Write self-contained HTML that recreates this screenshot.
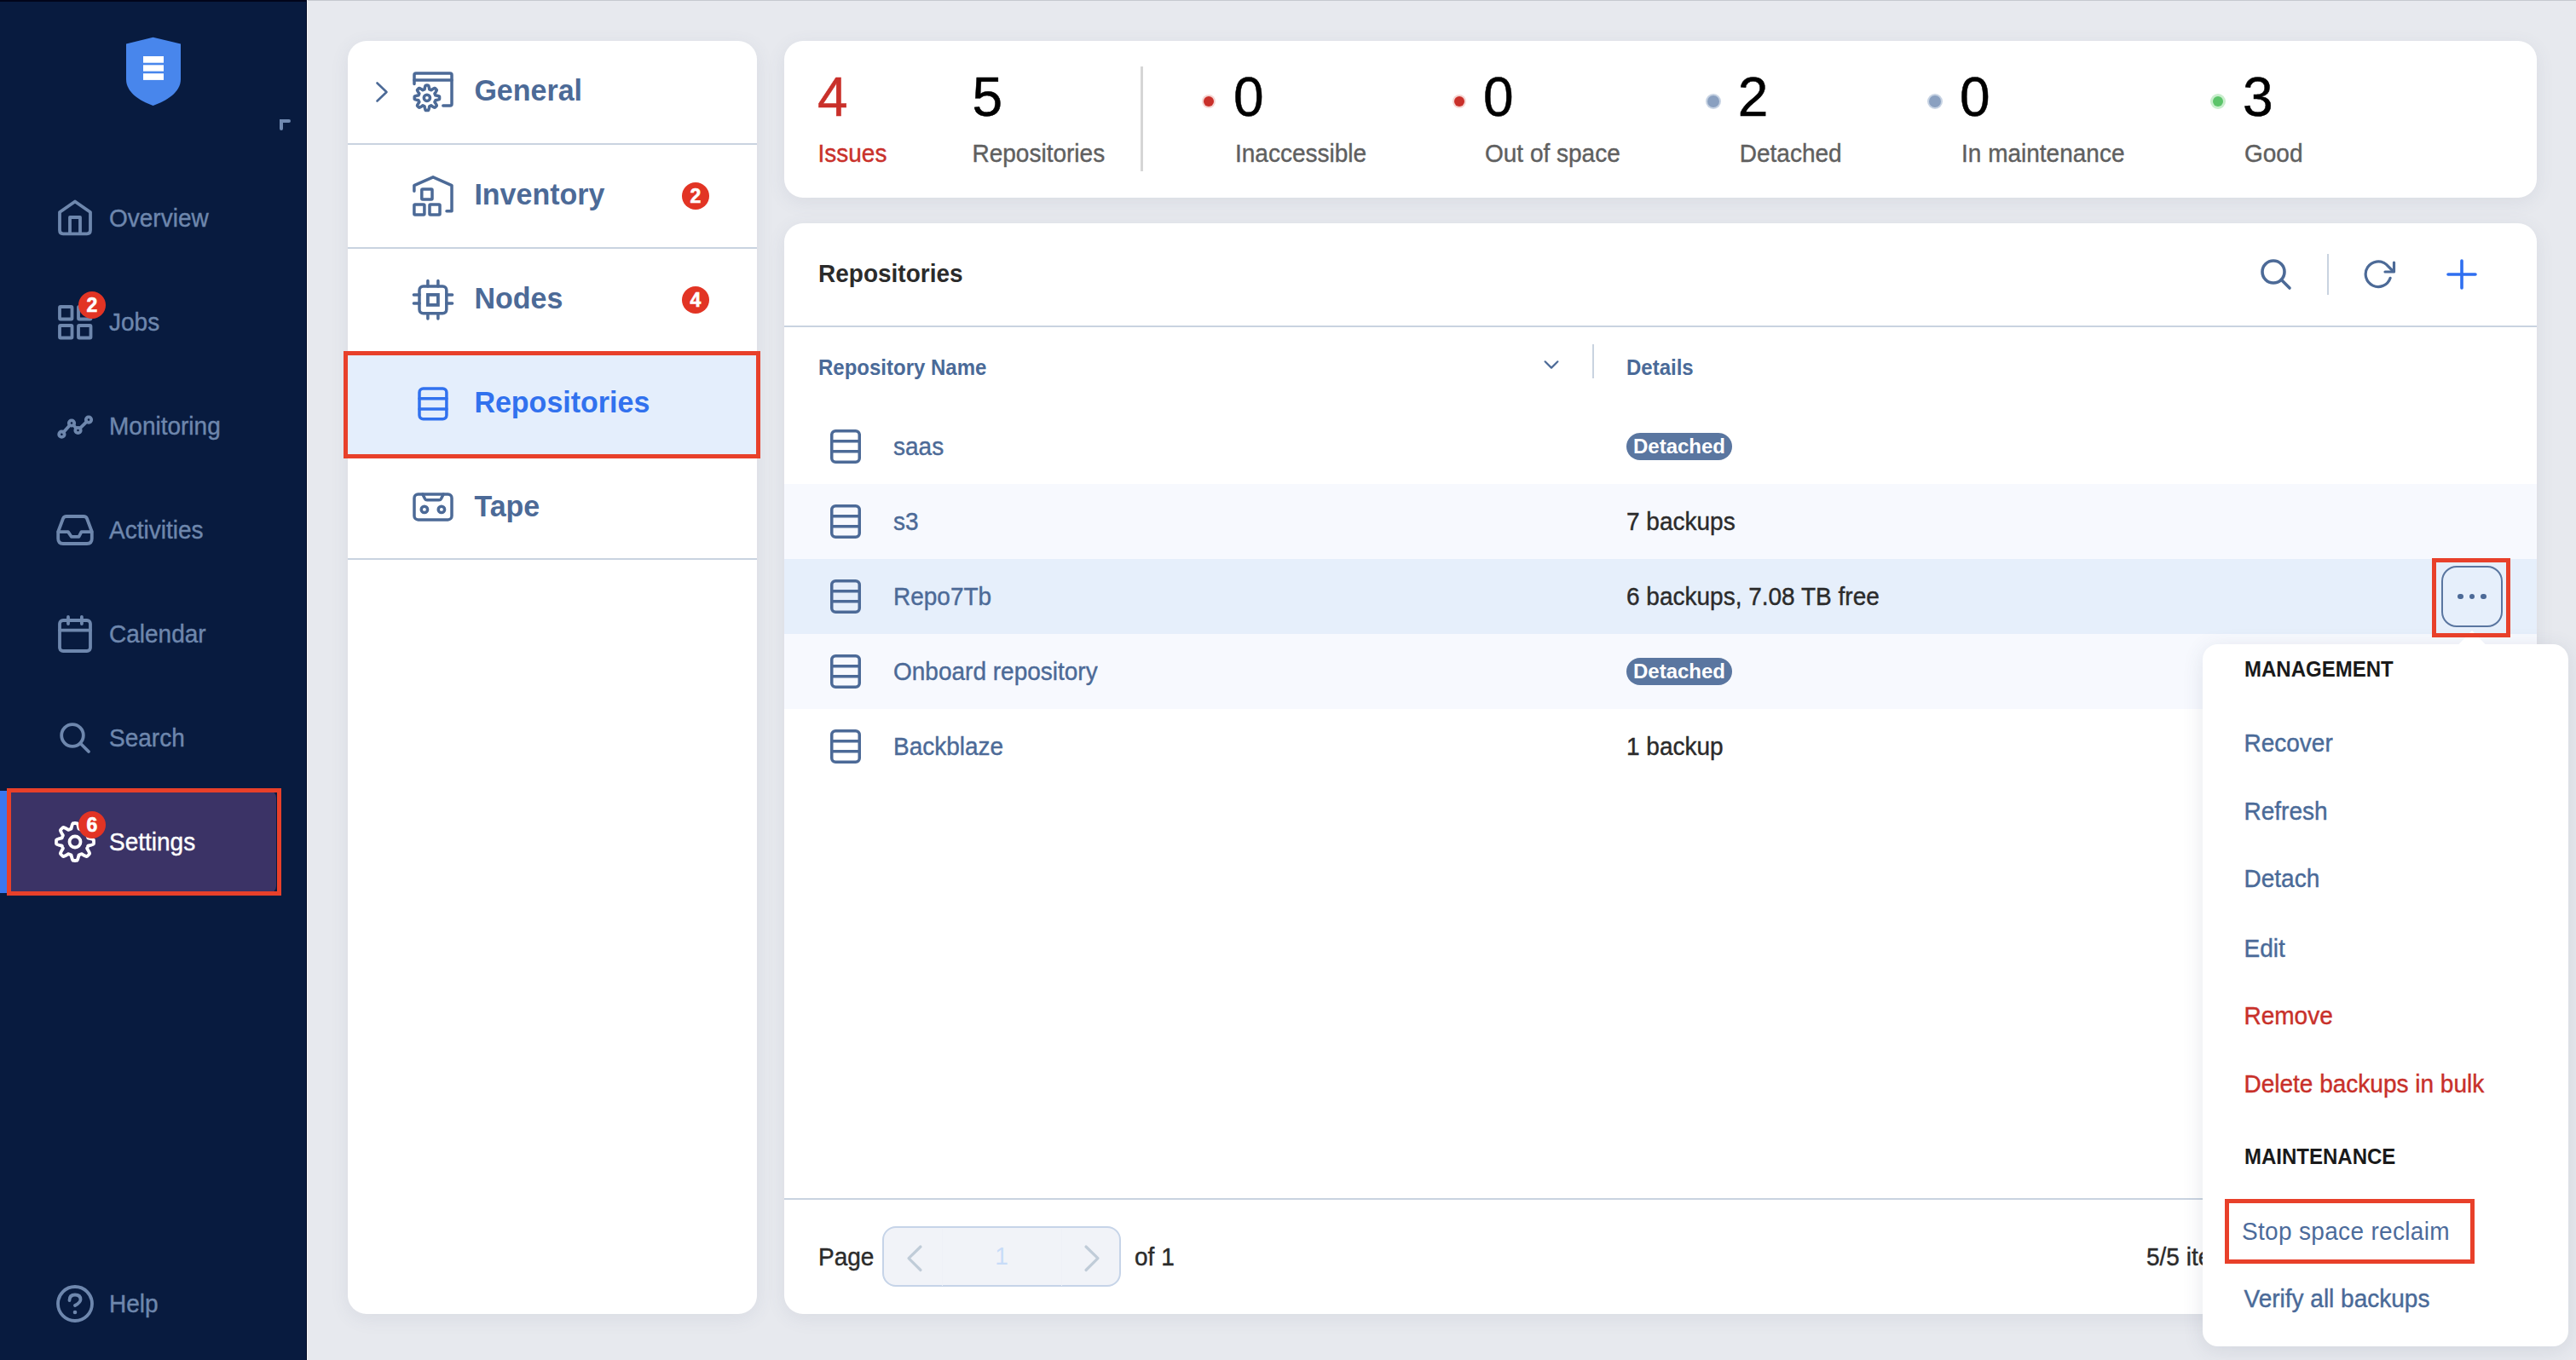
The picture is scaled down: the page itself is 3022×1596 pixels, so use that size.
<!DOCTYPE html>
<html><head><meta charset="utf-8">
<style>
*{margin:0;padding:0;box-sizing:border-box}
html,body{width:3022px;height:1596px;overflow:hidden;background:#e7e9ee;font-family:"Liberation Sans",sans-serif}
.a{position:absolute}
.t{position:absolute;white-space:nowrap}
svg{position:absolute;left:0;top:0;overflow:visible}
</style></head><body>
<div class="a" style="left:0;top:0;width:360px;height:1596px;background:#081b3f"></div>
<div class="a" style="left:0;top:0;width:360px;height:1.5px;background:#01051a"></div>
<div class="a" style="left:358.5px;top:0;width:1.5px;height:1596px;background:#030c26"></div>
<div class="a" style="left:361px;top:0;width:2661px;height:1px;background:#c6c9cf"></div>
<div class="a" style="left:360px;top:0;width:1px;height:1596px;background:#f4f5f8"></div>
<svg width="360" height="1596">
  <path d="M179.6 43.8 L212 51.4 L212 93 C212 108 196 118 179.6 124 C163 118 148 108 148 93 L148 51.4 Z" fill="#4886ec"/>
  <rect x="168" y="66" width="24" height="7.7" fill="#fff"/>
  <rect x="168" y="76.3" width="24" height="7.3" fill="#fff"/>
  <rect x="168" y="86.2" width="24" height="7.7" fill="#fff"/>
  <path d="M330 151 L330 142 L339 142" fill="none" stroke="#7089b0" stroke-width="4" stroke-linecap="round"/>
  <g fill="none" stroke="#6e87ad" stroke-width="3.8" stroke-linecap="round" stroke-linejoin="round">
    <path d="M70 249 L88 236.5 L106 249 L106 270 Q106 274.3 102 274.3 L74 274.3 Q70 274.3 70 270 Z"/>
    <path d="M82 274 L82 255 L94 255 L94 274"/>
    <rect x="70" y="360" width="14.5" height="14.5" rx="1"/>
    <rect x="92" y="360" width="14.5" height="14.5" rx="1"/>
    <rect x="70" y="382" width="14.5" height="14.5" rx="1"/>
    <rect x="92" y="382" width="14.5" height="14.5" rx="1"/>
    <circle cx="72.4" cy="509.7" r="3.2"/>
    <circle cx="84" cy="496.5" r="3.2"/>
    <circle cx="91.5" cy="505" r="3.2"/>
    <circle cx="104" cy="492.6" r="3.2"/>
    <path d="M74.5 507.3 L81.9 498.9 M86.2 499 L89.3 502.5 M93.8 502.7 L101.7 494.9"/>
    <path d="M68.2 624 L68.2 632 Q68.2 638 74 638 L102 638 Q107.8 638 107.8 632 L107.8 624 L102 608.5 Q101 606 98 606 L78 606 Q75 606 74 608.5 Z"/>
    <path d="M68.5 624.1 L79.9 624.1 L83.7 629.8 L92.5 629.8 L95.5 624.1 L107.5 624.1"/>
    <rect x="70" y="728" width="36" height="36" rx="4"/>
    <path d="M70 739.7 L106 739.7 M80 724 L80 732 M95.9 724 L95.9 732"/>
    <circle cx="85" cy="863" r="12.8"/>
    <path d="M94.5 872.5 L104 882"/>
    <circle cx="88" cy="1530" r="20"/>
    <path d="M81.5 1526 Q81.5 1519.5 88 1519.5 Q94.5 1519.5 94.5 1525 Q94.5 1528.5 88 1532"/>
  </g>
  <circle cx="88" cy="1540" r="2.3" fill="#6e87ad"/>
</svg>
<div class="a" style="left:0;top:928px;width:8px;height:120px;background:#3a78f0"></div>
<div class="a" style="left:8px;top:928px;width:316px;height:120px;background:#3b3366;border-radius:0 8px 8px 0"></div>
<svg width="360" height="1596">
  <g fill="none" stroke="#fff" stroke-width="3.8" stroke-linejoin="round">
    <path d="M88.00 966.00 L88.58 966.01 L89.15 966.03 L89.73 966.07 L90.30 966.12 L90.79 966.78 L91.20 967.77 L91.55 968.82 L91.85 969.91 L92.09 970.97 L92.30 971.97 L92.54 972.66 L92.94 972.78 L93.34 972.92 L93.73 973.06 L94.12 973.22 L94.51 973.38 L94.89 973.56 L95.26 973.74 L95.63 973.94 L96.30 973.62 L97.15 973.06 L98.07 972.49 L99.05 971.93 L100.04 971.43 L101.03 971.02 L101.85 970.90 L102.29 971.27 L102.72 971.65 L103.14 972.04 L103.56 972.44 L103.96 972.86 L104.35 973.28 L104.73 973.71 L105.10 974.15 L104.98 974.97 L104.57 975.96 L104.07 976.95 L103.51 977.93 L102.94 978.85 L102.38 979.70 L102.06 980.37 L102.26 980.74 L102.44 981.11 L102.62 981.49 L102.78 981.88 L102.94 982.27 L103.08 982.66 L103.22 983.06 L103.34 983.46 L104.03 983.70 L105.03 983.91 L106.09 984.15 L107.18 984.45 L108.23 984.80 L109.22 985.21 L109.88 985.70 L109.93 986.27 L109.97 986.85 L109.99 987.42 L110.00 988.00 L109.99 988.58 L109.97 989.15 L109.93 989.73 L109.88 990.30 L109.22 990.79 L108.23 991.20 L107.18 991.55 L106.09 991.85 L105.03 992.09 L104.03 992.30 L103.34 992.54 L103.22 992.94 L103.08 993.34 L102.94 993.73 L102.78 994.12 L102.62 994.51 L102.44 994.89 L102.26 995.26 L102.06 995.63 L102.38 996.30 L102.94 997.15 L103.51 998.07 L104.07 999.05 L104.57 1000.04 L104.98 1001.03 L105.10 1001.85 L104.73 1002.29 L104.35 1002.72 L103.96 1003.14 L103.56 1003.56 L103.14 1003.96 L102.72 1004.35 L102.29 1004.73 L101.85 1005.10 L101.03 1004.98 L100.04 1004.57 L99.05 1004.07 L98.07 1003.51 L97.15 1002.94 L96.30 1002.38 L95.63 1002.06 L95.26 1002.26 L94.89 1002.44 L94.51 1002.62 L94.12 1002.78 L93.73 1002.94 L93.34 1003.08 L92.94 1003.22 L92.54 1003.34 L92.30 1004.03 L92.09 1005.03 L91.85 1006.09 L91.55 1007.18 L91.20 1008.23 L90.79 1009.22 L90.30 1009.88 L89.73 1009.93 L89.15 1009.97 L88.58 1009.99 L88.00 1010.00 L87.42 1009.99 L86.85 1009.97 L86.27 1009.93 L85.70 1009.88 L85.21 1009.22 L84.80 1008.23 L84.45 1007.18 L84.15 1006.09 L83.91 1005.03 L83.70 1004.03 L83.46 1003.34 L83.06 1003.22 L82.66 1003.08 L82.27 1002.94 L81.88 1002.78 L81.49 1002.62 L81.11 1002.44 L80.74 1002.26 L80.37 1002.06 L79.70 1002.38 L78.85 1002.94 L77.93 1003.51 L76.95 1004.07 L75.96 1004.57 L74.97 1004.98 L74.15 1005.10 L73.71 1004.73 L73.28 1004.35 L72.86 1003.96 L72.44 1003.56 L72.04 1003.14 L71.65 1002.72 L71.27 1002.29 L70.90 1001.85 L71.02 1001.03 L71.43 1000.04 L71.93 999.05 L72.49 998.07 L73.06 997.15 L73.62 996.30 L73.94 995.63 L73.74 995.26 L73.56 994.89 L73.38 994.51 L73.22 994.12 L73.06 993.73 L72.92 993.34 L72.78 992.94 L72.66 992.54 L71.97 992.30 L70.97 992.09 L69.91 991.85 L68.82 991.55 L67.77 991.20 L66.78 990.79 L66.12 990.30 L66.07 989.73 L66.03 989.15 L66.01 988.58 L66.00 988.00 L66.01 987.42 L66.03 986.85 L66.07 986.27 L66.12 985.70 L66.78 985.21 L67.77 984.80 L68.82 984.45 L69.91 984.15 L70.97 983.91 L71.97 983.70 L72.66 983.46 L72.78 983.06 L72.92 982.66 L73.06 982.27 L73.22 981.88 L73.38 981.49 L73.56 981.11 L73.74 980.74 L73.94 980.37 L73.62 979.70 L73.06 978.85 L72.49 977.93 L71.93 976.95 L71.43 975.96 L71.02 974.97 L70.90 974.15 L71.27 973.71 L71.65 973.28 L72.04 972.86 L72.44 972.44 L72.86 972.04 L73.28 971.65 L73.71 971.27 L74.15 970.90 L74.97 971.02 L75.96 971.43 L76.95 971.93 L77.93 972.49 L78.85 973.06 L79.70 973.62 L80.37 973.94 L80.74 973.74 L81.11 973.56 L81.49 973.38 L81.88 973.22 L82.27 973.06 L82.66 972.92 L83.06 972.78 L83.46 972.66 L83.70 971.97 L83.91 970.97 L84.15 969.91 L84.45 968.82 L84.80 967.77 L85.21 966.78 L85.70 966.12 L86.27 966.07 L86.85 966.03 L87.42 966.01 Z"/>
    <circle cx="88" cy="988" r="6.5"/>
  </g>
</svg>
<div class="a" style="left:92px;top:342px;width:32px;height:32px;border-radius:16px;background:#e23424"></div>
<div class="t" style="left:92px;top:342px;width:32px;height:32px;line-height:32px;text-align:center;color:#fff;font-weight:bold;font-size:23px;-webkit-text-stroke:0.6px #fff">2</div>
<div class="a" style="left:92px;top:952px;width:32px;height:32px;border-radius:16px;background:#e23424"></div>
<div class="t" style="left:92px;top:952px;width:32px;height:32px;line-height:32px;text-align:center;color:#fff;font-weight:bold;font-size:23px;-webkit-text-stroke:0.6px #fff">6</div>
<div class="t" style="left:128px;top:243.0px;font-size:28px;line-height:28px;color:#6e87ad;-webkit-text-stroke:0.4px #6e87ad;transform:scaleY(1.06);transform-origin:0 23.71px;">Overview</div>
<div class="t" style="left:128px;top:365.0px;font-size:28px;line-height:28px;color:#6e87ad;-webkit-text-stroke:0.4px #6e87ad;transform:scaleY(1.06);transform-origin:0 23.71px;">Jobs</div>
<div class="t" style="left:128px;top:487.0px;font-size:28px;line-height:28px;color:#6e87ad;-webkit-text-stroke:0.4px #6e87ad;transform:scaleY(1.06);transform-origin:0 23.71px;">Monitoring</div>
<div class="t" style="left:128px;top:609.0px;font-size:28px;line-height:28px;color:#6e87ad;-webkit-text-stroke:0.4px #6e87ad;transform:scaleY(1.06);transform-origin:0 23.71px;">Activities</div>
<div class="t" style="left:128px;top:731.0px;font-size:28px;line-height:28px;color:#6e87ad;-webkit-text-stroke:0.4px #6e87ad;transform:scaleY(1.06);transform-origin:0 23.71px;">Calendar</div>
<div class="t" style="left:128px;top:853.0px;font-size:28px;line-height:28px;color:#6e87ad;-webkit-text-stroke:0.4px #6e87ad;transform:scaleY(1.06);transform-origin:0 23.71px;">Search</div>
<div class="t" style="left:128px;top:975.0px;font-size:28px;line-height:28px;color:#fff;-webkit-text-stroke:0.4px #fff;transform:scaleY(1.06);transform-origin:0 23.71px;">Settings</div>
<div class="t" style="left:128px;top:1517.0px;font-size:28px;line-height:28px;color:#6e87ad;-webkit-text-stroke:0.4px #6e87ad;transform:scaleY(1.06);transform-origin:0 23.71px;">Help</div>
<div class="a" style="left:8px;top:925px;width:322px;height:126px;border:5px solid #e8402a"></div>
<div class="a" style="left:408px;top:48px;width:480px;height:1494px;background:#fff;border-radius:22px;box-shadow:0 5px 22px rgba(80,90,125,0.09)"></div>
<div class="a" style="left:408px;top:168px;width:480px;height:2px;background:#c9d3e0"></div>
<div class="a" style="left:408px;top:290px;width:480px;height:2px;background:#c9d3e0"></div>
<div class="a" style="left:408px;top:412px;width:480px;height:2px;background:#c9d3e0"></div>
<div class="a" style="left:408px;top:534px;width:480px;height:2px;background:#c9d3e0"></div>
<div class="a" style="left:408px;top:655px;width:480px;height:2px;background:#c9d3e0"></div>
<div class="a" style="left:408px;top:414px;width:480px;height:121px;background:#e4eefc"></div>
<svg width="900" height="700">
 <g fill="none" stroke="#4c6a97" stroke-width="3.5" stroke-linecap="round" stroke-linejoin="round">
  <path d="M442.5 97.5 L453.5 108 L442.5 118.5" stroke-width="2.6"/>
  <path d="M486 98.4 L486 88 Q486 86 488 86 L528 86 Q530 86 530 88 L530 122 Q530 124 528 124 L519.8 124"/>
  <path d="M486 94 L530 94"/>
  <path d="M500.90 100.10 L501.28 100.11 L501.67 100.12 L502.05 100.15 L502.44 100.18 L502.76 100.66 L503.03 101.38 L503.24 102.15 L503.42 102.93 L503.56 103.70 L503.68 104.43 L503.83 104.92 L504.08 105.00 L504.34 105.09 L504.59 105.18 L504.84 105.28 L505.09 105.39 L505.33 105.50 L505.58 105.62 L505.81 105.75 L506.27 105.50 L506.86 105.07 L507.51 104.63 L508.19 104.20 L508.89 103.81 L509.58 103.49 L510.15 103.38 L510.45 103.62 L510.74 103.88 L511.02 104.14 L511.29 104.41 L511.56 104.68 L511.82 104.96 L512.08 105.25 L512.32 105.55 L512.21 106.12 L511.89 106.81 L511.50 107.51 L511.07 108.19 L510.63 108.84 L510.20 109.43 L509.95 109.89 L510.08 110.12 L510.20 110.37 L510.31 110.61 L510.42 110.86 L510.52 111.11 L510.61 111.36 L510.70 111.62 L510.78 111.87 L511.27 112.02 L512.00 112.14 L512.77 112.28 L513.55 112.46 L514.32 112.67 L515.04 112.94 L515.52 113.26 L515.55 113.65 L515.58 114.03 L515.59 114.42 L515.60 114.80 L515.59 115.18 L515.58 115.57 L515.55 115.95 L515.52 116.34 L515.04 116.66 L514.32 116.93 L513.55 117.14 L512.77 117.32 L512.00 117.46 L511.27 117.58 L510.78 117.73 L510.70 117.98 L510.61 118.24 L510.52 118.49 L510.42 118.74 L510.31 118.99 L510.20 119.23 L510.08 119.48 L509.95 119.71 L510.20 120.17 L510.63 120.76 L511.07 121.41 L511.50 122.09 L511.89 122.79 L512.21 123.48 L512.32 124.05 L512.08 124.35 L511.82 124.64 L511.56 124.92 L511.29 125.19 L511.02 125.46 L510.74 125.72 L510.45 125.98 L510.15 126.22 L509.58 126.11 L508.89 125.79 L508.19 125.40 L507.51 124.97 L506.86 124.53 L506.27 124.10 L505.81 123.85 L505.58 123.98 L505.33 124.10 L505.09 124.21 L504.84 124.32 L504.59 124.42 L504.34 124.51 L504.08 124.60 L503.83 124.68 L503.68 125.17 L503.56 125.90 L503.42 126.67 L503.24 127.45 L503.03 128.22 L502.76 128.94 L502.44 129.42 L502.05 129.45 L501.67 129.48 L501.28 129.49 L500.90 129.50 L500.52 129.49 L500.13 129.48 L499.75 129.45 L499.36 129.42 L499.04 128.94 L498.77 128.22 L498.56 127.45 L498.38 126.67 L498.24 125.90 L498.12 125.17 L497.97 124.68 L497.72 124.60 L497.46 124.51 L497.21 124.42 L496.96 124.32 L496.71 124.21 L496.47 124.10 L496.22 123.98 L495.99 123.85 L495.53 124.10 L494.94 124.53 L494.29 124.97 L493.61 125.40 L492.91 125.79 L492.22 126.11 L491.65 126.22 L491.35 125.98 L491.06 125.72 L490.78 125.46 L490.51 125.19 L490.24 124.92 L489.98 124.64 L489.72 124.35 L489.48 124.05 L489.59 123.48 L489.91 122.79 L490.30 122.09 L490.73 121.41 L491.17 120.76 L491.60 120.17 L491.85 119.71 L491.72 119.48 L491.60 119.23 L491.49 118.99 L491.38 118.74 L491.28 118.49 L491.19 118.24 L491.10 117.98 L491.02 117.73 L490.53 117.58 L489.80 117.46 L489.03 117.32 L488.25 117.14 L487.48 116.93 L486.76 116.66 L486.28 116.34 L486.25 115.95 L486.22 115.57 L486.21 115.18 L486.20 114.80 L486.21 114.42 L486.22 114.03 L486.25 113.65 L486.28 113.26 L486.76 112.94 L487.48 112.67 L488.25 112.46 L489.03 112.28 L489.80 112.14 L490.53 112.02 L491.02 111.87 L491.10 111.62 L491.19 111.36 L491.28 111.11 L491.38 110.86 L491.49 110.61 L491.60 110.37 L491.72 110.12 L491.85 109.89 L491.60 109.43 L491.17 108.84 L490.73 108.19 L490.30 107.51 L489.91 106.81 L489.59 106.12 L489.48 105.55 L489.72 105.25 L489.98 104.96 L490.24 104.68 L490.51 104.41 L490.78 104.14 L491.06 103.88 L491.35 103.62 L491.65 103.38 L492.22 103.49 L492.91 103.81 L493.61 104.20 L494.29 104.63 L494.94 105.07 L495.53 105.50 L495.99 105.75 L496.22 105.62 L496.47 105.50 L496.71 105.39 L496.96 105.28 L497.21 105.18 L497.46 105.09 L497.72 105.00 L497.97 104.92 L498.12 104.43 L498.24 103.70 L498.38 102.93 L498.56 102.15 L498.77 101.38 L499.04 100.66 L499.36 100.18 L499.75 100.15 L500.13 100.12 L500.52 100.11 Z"/>
  <circle cx="500.9" cy="114.8" r="3.6"/>
  <path d="M485.9 224.2 L485.9 217.6 L508 207.8 L530 217.6 L530 247.8 L524 247.8"/>
  <rect x="494.8" y="222.1" width="12.2" height="11.8" rx="1"/>
  <rect x="485.9" y="240" width="12" height="12" rx="1"/>
  <rect x="504" y="240" width="12" height="12" rx="1"/>
  <rect x="492" y="336" width="31.8" height="31.8" rx="4.5"/>
  <rect x="501.9" y="345.9" width="12" height="12" stroke-width="3.8" stroke-linecap="butt" stroke-linejoin="miter"/>
  <path d="M501.9 329.4 L501.9 336 M513.9 329.4 L513.9 336 M501.9 368 L501.9 374.1 M513.9 368 L513.9 374.1 M485.4 345.9 L492 345.9 M485.4 356 L492 356 M524 345.9 L530.6 345.9 M524 356 L530.6 356"/>
  <rect x="486" y="580" width="44" height="29.9" rx="4.5"/>
  <path d="M495.8 580 L498.6 585.5 Q499.3 586.8 501 586.8 L515 586.8 Q516.7 586.8 517.4 585.5 L520.2 580"/>
  <circle cx="497.9" cy="597.9" r="3.7"/>
  <circle cx="517.9" cy="597.9" r="3.7"/>
 </g>
 <g fill="none" stroke="#3171ee" stroke-width="3.5" stroke-linecap="round" stroke-linejoin="round">
  <rect x="492" y="456" width="31.9" height="35.8" rx="4.5"/>
  <path d="M492 467.8 L523.9 467.8 M492 479.9 L523.9 479.9"/>
 </g>
</svg>
<div class="t" style="left:556.4px;top:89.2px;font-size:34px;line-height:34px;font-weight:bold;color:#4c6a97;transform:scaleY(1.04);transform-origin:0 28.79px;">General</div>
<div class="t" style="left:556.4px;top:211.2px;font-size:34px;line-height:34px;font-weight:bold;color:#4c6a97;transform:scaleY(1.04);transform-origin:0 28.79px;">Inventory</div>
<div class="t" style="left:556.4px;top:333.2px;font-size:34px;line-height:34px;font-weight:bold;color:#4c6a97;transform:scaleY(1.04);transform-origin:0 28.79px;">Nodes</div>
<div class="t" style="left:556.4px;top:455.2px;font-size:34px;line-height:34px;font-weight:bold;color:#3171ee;transform:scaleY(1.04);transform-origin:0 28.79px;">Repositories</div>
<div class="t" style="left:556.4px;top:577.2px;font-size:34px;line-height:34px;font-weight:bold;color:#4c6a97;transform:scaleY(1.04);transform-origin:0 28.79px;">Tape</div>
<div class="a" style="left:800px;top:214px;width:32px;height:32px;border-radius:16px;background:#e23424"></div>
<div class="t" style="left:800px;top:214px;width:32px;height:32px;line-height:32px;text-align:center;color:#fff;font-weight:bold;font-size:23px;-webkit-text-stroke:0.6px #fff">2</div>
<div class="a" style="left:800px;top:336px;width:32px;height:32px;border-radius:16px;background:#e23424"></div>
<div class="t" style="left:800px;top:336px;width:32px;height:32px;line-height:32px;text-align:center;color:#fff;font-weight:bold;font-size:23px;-webkit-text-stroke:0.6px #fff">4</div>
<div class="a" style="left:403px;top:412px;width:489px;height:126px;border:5px solid #e8402a"></div>
<div class="a" style="left:920px;top:48px;width:2056px;height:184px;background:#fff;border-radius:22px;box-shadow:0 5px 22px rgba(80,90,125,0.09)"></div>
<div class="t" style="left:959px;top:82.4px;font-size:64px;line-height:64px;color:#c9302a;-webkit-text-stroke:0.5px #c9302a;transform:scaleY(1.02);transform-origin:0 54.19px;">4</div>
<div class="t" style="left:959.5px;top:167.0px;font-size:28px;line-height:28px;color:#c9302a;-webkit-text-stroke:0.4px #c9302a;transform:scaleY(1.06);transform-origin:0 23.71px;">Issues</div>
<div class="t" style="left:1140.5px;top:82.4px;font-size:64px;line-height:64px;color:#000;-webkit-text-stroke:0.5px #000;transform:scaleY(1.02);transform-origin:0 54.19px;">5</div>
<div class="t" style="left:1140.5px;top:167.0px;font-size:28px;line-height:28px;color:#5f5f5f;-webkit-text-stroke:0.4px #5f5f5f;transform:scaleY(1.06);transform-origin:0 23.71px;">Repositories</div>
<div class="a" style="left:1338px;top:78px;width:3px;height:123px;background:#d6d6d6"></div>
<div class="a" style="left:1412px;top:113px;width:12px;height:12px;border-radius:6px;background:#c9302a;box-shadow:0 0 0 2px #f6d5d2"></div>
<div class="t" style="left:1447px;top:82.4px;font-size:64px;line-height:64px;color:#000;-webkit-text-stroke:0.5px #000;transform:scaleY(1.02);transform-origin:0 54.19px;">0</div>
<div class="t" style="left:1449px;top:167.0px;font-size:28px;line-height:28px;color:#5f5f5f;-webkit-text-stroke:0.4px #5f5f5f;transform:scaleY(1.06);transform-origin:0 23.71px;">Inaccessible</div>
<div class="a" style="left:1706px;top:113px;width:12px;height:12px;border-radius:6px;background:#c9302a;box-shadow:0 0 0 2px #f6d5d2"></div>
<div class="t" style="left:1740px;top:82.4px;font-size:64px;line-height:64px;color:#000;-webkit-text-stroke:0.5px #000;transform:scaleY(1.02);transform-origin:0 54.19px;">0</div>
<div class="t" style="left:1742px;top:167.0px;font-size:28px;line-height:28px;color:#5f5f5f;-webkit-text-stroke:0.4px #5f5f5f;transform:scaleY(1.06);transform-origin:0 23.71px;">Out of space</div>
<div class="a" style="left:2002.6px;top:112px;width:14px;height:14px;border-radius:7px;background:#8aa0c0;box-shadow:0 0 0 2px #c7d3e3"></div>
<div class="t" style="left:2038.8px;top:82.4px;font-size:64px;line-height:64px;color:#000;-webkit-text-stroke:0.5px #000;transform:scaleY(1.02);transform-origin:0 54.19px;">2</div>
<div class="t" style="left:2040.8px;top:167.0px;font-size:28px;line-height:28px;color:#5f5f5f;-webkit-text-stroke:0.4px #5f5f5f;transform:scaleY(1.06);transform-origin:0 23.71px;">Detached</div>
<div class="a" style="left:2262.6px;top:112px;width:14px;height:14px;border-radius:7px;background:#8aa0c0;box-shadow:0 0 0 2px #c7d3e3"></div>
<div class="t" style="left:2299px;top:82.4px;font-size:64px;line-height:64px;color:#000;-webkit-text-stroke:0.5px #000;transform:scaleY(1.02);transform-origin:0 54.19px;">0</div>
<div class="t" style="left:2301px;top:167.0px;font-size:28px;line-height:28px;color:#5f5f5f;-webkit-text-stroke:0.4px #5f5f5f;transform:scaleY(1.06);transform-origin:0 23.71px;">In maintenance</div>
<div class="a" style="left:2596px;top:113px;width:12px;height:12px;border-radius:6px;background:#5cc46a;box-shadow:0 0 0 3px #c9eecd"></div>
<div class="t" style="left:2631px;top:82.4px;font-size:64px;line-height:64px;color:#000;-webkit-text-stroke:0.5px #000;transform:scaleY(1.02);transform-origin:0 54.19px;">3</div>
<div class="t" style="left:2633px;top:167.0px;font-size:28px;line-height:28px;color:#5f5f5f;-webkit-text-stroke:0.4px #5f5f5f;transform:scaleY(1.06);transform-origin:0 23.71px;">Good</div>
<div class="a" style="left:920px;top:262px;width:2056px;height:1280px;background:#fff;border-radius:22px;box-shadow:0 5px 22px rgba(80,90,125,0.09)"></div>
<div class="t" style="left:960px;top:308.3px;font-size:28px;line-height:28px;font-weight:bold;color:#2b2b2b;transform:scaleY(1.04);transform-origin:0 23.71px;">Repositories</div>
<div class="a" style="left:920px;top:382px;width:2056px;height:2px;background:#c9d3e0"></div>
<div class="a" style="left:2730px;top:298px;width:2px;height:48px;background:#c9d3e0"></div>
<div class="a" style="left:920px;top:480px;width:2056px;height:88px;background:#ffffff"></div>
<svg width="1100" height="1000"><g fill="none" stroke="#4c6a97" stroke-width="3.5"><rect x="975.75" y="505.75" width="32.5" height="36.5" rx="4.5"/><path d="M975.75 517.8 L1008.25 517.8 M975.75 529.8 L1008.25 529.8"/></g></svg>
<div class="t" style="left:1048px;top:511.4px;font-size:28px;line-height:28px;color:#4c6a97;-webkit-text-stroke:0.4px #4c6a97;transform:scaleY(1.06);transform-origin:0 23.71px;">saas</div>
<div class="t" style="left:1908px;top:508px;width:124px;height:32px;border-radius:16px;background:#5a76a0;color:#fff;font-weight:bold;font-size:24px;line-height:32px;text-align:center">Detached</div>
<div class="a" style="left:920px;top:568px;width:2056px;height:88px;background:#f7f9fe"></div>
<svg width="1100" height="1000"><g fill="none" stroke="#4c6a97" stroke-width="3.5"><rect x="975.75" y="593.75" width="32.5" height="36.5" rx="4.5"/><path d="M975.75 605.8 L1008.25 605.8 M975.75 617.8 L1008.25 617.8"/></g></svg>
<div class="t" style="left:1048px;top:599.4px;font-size:28px;line-height:28px;color:#4c6a97;-webkit-text-stroke:0.4px #4c6a97;transform:scaleY(1.06);transform-origin:0 23.71px;">s3</div>
<div class="t" style="left:1908px;top:599.4px;font-size:28px;line-height:28px;color:#2b2b2b;-webkit-text-stroke:0.4px #2b2b2b;transform:scaleY(1.06);transform-origin:0 23.71px;">7 backups</div>
<div class="a" style="left:920px;top:656px;width:2056px;height:88px;background:#e6effb"></div>
<svg width="1100" height="1000"><g fill="none" stroke="#4c6a97" stroke-width="3.5"><rect x="975.75" y="681.75" width="32.5" height="36.5" rx="4.5"/><path d="M975.75 693.8 L1008.25 693.8 M975.75 705.8 L1008.25 705.8"/></g></svg>
<div class="t" style="left:1048px;top:687.4px;font-size:28px;line-height:28px;color:#4c6a97;-webkit-text-stroke:0.4px #4c6a97;transform:scaleY(1.06);transform-origin:0 23.71px;">Repo7Tb</div>
<div class="t" style="left:1908px;top:687.4px;font-size:28px;line-height:28px;color:#2b2b2b;-webkit-text-stroke:0.4px #2b2b2b;transform:scaleY(1.06);transform-origin:0 23.71px;">6 backups, 7.08 TB free</div>
<div class="a" style="left:920px;top:744px;width:2056px;height:88px;background:#f7f9fe"></div>
<svg width="1100" height="1000"><g fill="none" stroke="#4c6a97" stroke-width="3.5"><rect x="975.75" y="769.75" width="32.5" height="36.5" rx="4.5"/><path d="M975.75 781.8 L1008.25 781.8 M975.75 793.8 L1008.25 793.8"/></g></svg>
<div class="t" style="left:1048px;top:775.4px;font-size:28px;line-height:28px;color:#4c6a97;-webkit-text-stroke:0.4px #4c6a97;transform:scaleY(1.06);transform-origin:0 23.71px;">Onboard repository</div>
<div class="t" style="left:1908px;top:772px;width:124px;height:32px;border-radius:16px;background:#5a76a0;color:#fff;font-weight:bold;font-size:24px;line-height:32px;text-align:center">Detached</div>
<div class="a" style="left:920px;top:832px;width:2056px;height:88px;background:#ffffff"></div>
<svg width="1100" height="1000"><g fill="none" stroke="#4c6a97" stroke-width="3.5"><rect x="975.75" y="857.75" width="32.5" height="36.5" rx="4.5"/><path d="M975.75 869.8 L1008.25 869.8 M975.75 881.8 L1008.25 881.8"/></g></svg>
<div class="t" style="left:1048px;top:863.4px;font-size:28px;line-height:28px;color:#4c6a97;-webkit-text-stroke:0.4px #4c6a97;transform:scaleY(1.06);transform-origin:0 23.71px;">Backblaze</div>
<div class="t" style="left:1908px;top:863.4px;font-size:28px;line-height:28px;color:#2b2b2b;-webkit-text-stroke:0.4px #2b2b2b;transform:scaleY(1.06);transform-origin:0 23.71px;">1 backup</div>
<svg width="3022" height="1596">
 <g fill="none" stroke="#4c6a97" stroke-width="3.6" stroke-linecap="round" stroke-linejoin="round">
  <circle cx="2667" cy="319" r="13"/>
  <path d="M2676.5 328.5 L2686 338"/>
  <path d="M2804.08 326.27 A14.8 14.8 0 1 1 2799.51 310.36 L2807.5 318.3" stroke-width="3.2"/>
  <path d="M2808.5 308 L2808.5 319 L2798 319" stroke-width="3.2"/>
  <path d="M1812.6 424.3 L1820 431.6 L1827.4 424.3" stroke-width="2.2"/>
 </g>
 <path d="M2888 306 L2888 338 M2872 322 L2904 322" fill="none" stroke="#2f6ff0" stroke-width="3.6" stroke-linecap="round"/>
</svg>
<div class="t" style="left:960px;top:420.0px;font-size:24px;line-height:24px;font-weight:bold;color:#4a6a98;transform:scaleY(1.04);transform-origin:0 20.32px;">Repository Name</div>
<div class="a" style="left:1868px;top:404px;width:2px;height:40px;background:#c9d3e0"></div>
<div class="t" style="left:1908px;top:420.0px;font-size:24px;line-height:24px;font-weight:bold;color:#4a6a98;transform:scaleY(1.04);transform-origin:0 20.32px;">Details</div>
<div class="a" style="left:2864px;top:664px;width:72px;height:72px;border:2px solid #5a76a0;border-radius:18px"></div>
<div class="a" style="left:2883.2px;top:696.5px;width:6.6px;height:6.6px;border-radius:4px;background:#4c6a97"></div>
<div class="a" style="left:2896.7px;top:696.5px;width:6.6px;height:6.6px;border-radius:4px;background:#4c6a97"></div>
<div class="a" style="left:2910.0px;top:696.5px;width:6.6px;height:6.6px;border-radius:4px;background:#4c6a97"></div>
<div class="a" style="left:920px;top:1406px;width:2056px;height:2px;background:#c9d3e0"></div>
<div class="t" style="left:960px;top:1462.0px;font-size:28px;line-height:28px;color:#2b2b2b;-webkit-text-stroke:0.4px #2b2b2b;transform:scaleY(1.06);transform-origin:0 23.71px;">Page</div>
<div class="a" style="left:1035px;top:1439px;width:280px;height:71px;border:2px solid #c6d4e8;border-radius:16px;background:#f1f3f8"></div>
<div class="a" style="left:1105px;top:1442px;width:1px;height:67px;background:#eef1f7"></div>
<div class="a" style="left:1245px;top:1442px;width:1px;height:67px;background:#eef1f7"></div>
<svg width="1400" height="1596"><g fill="none" stroke="#c0ccd8" stroke-width="3.2" stroke-linecap="round" stroke-linejoin="round"><path d="M1080 1463 L1066 1476.7 L1080 1490.5"/><path d="M1274 1463 L1288 1476.7 L1274 1490.5"/></g></svg>
<div class="t" style="left:1163px;top:1461.3px;width:24px;text-align:center;font-size:28px;line-height:28px;color:#c8dcf8;transform:scaleY(1.06);transform-origin:0 23.7px">1</div>
<div class="t" style="left:1331px;top:1462.0px;font-size:28px;line-height:28px;color:#2b2b2b;-webkit-text-stroke:0.4px #2b2b2b;transform:scaleY(1.06);transform-origin:0 23.71px;">of 1</div>
<div class="t" style="left:2518px;top:1462.0px;font-size:28px;line-height:28px;color:#2b2b2b;-webkit-text-stroke:0.4px #2b2b2b;transform:scaleY(1.06);transform-origin:0 23.71px;">5/5 items</div>
<div class="a" style="left:2584px;top:756px;width:429px;height:824px;background:#fff;border-radius:18px;box-shadow:0 4px 24px rgba(60,70,110,0.12)"></div>
<svg width="3022" height="1596"><path d="M2884 756.5 L2900 740 L2916 756.5 Z" fill="#fff"/></svg>
<div class="t" style="left:2633px;top:774.0px;font-size:24px;line-height:24px;font-weight:bold;color:#1a1a1a;transform:scaleY(1.04);transform-origin:0 20.32px;">MANAGEMENT</div>
<div class="t" style="left:2632.5px;top:859.0px;font-size:28px;line-height:28px;color:#4a6a98;-webkit-text-stroke:0.4px #4a6a98;transform:scaleY(1.06);transform-origin:0 23.71px;">Recover</div>
<div class="t" style="left:2632.5px;top:938.5px;font-size:28px;line-height:28px;color:#4a6a98;-webkit-text-stroke:0.4px #4a6a98;transform:scaleY(1.06);transform-origin:0 23.71px;">Refresh</div>
<div class="t" style="left:2632.5px;top:1018.2px;font-size:28px;line-height:28px;color:#4a6a98;-webkit-text-stroke:0.4px #4a6a98;transform:scaleY(1.06);transform-origin:0 23.71px;">Detach</div>
<div class="t" style="left:2632.5px;top:1099.5px;font-size:28px;line-height:28px;color:#4a6a98;-webkit-text-stroke:0.4px #4a6a98;transform:scaleY(1.06);transform-origin:0 23.71px;">Edit</div>
<div class="t" style="left:2632.5px;top:1179.2px;font-size:28px;line-height:28px;color:#c8302a;-webkit-text-stroke:0.4px #c8302a;transform:scaleY(1.06);transform-origin:0 23.71px;">Remove</div>
<div class="t" style="left:2632.5px;top:1259.3px;font-size:28px;line-height:28px;color:#c8302a;-webkit-text-stroke:0.4px #c8302a;transform:scaleY(1.06);transform-origin:0 23.71px;">Delete backups in bulk</div>
<div class="t" style="left:2630px;top:1431.5px;font-size:28px;line-height:28px;color:#4c6b9b;-webkit-text-stroke:0.4px #4c6b9b;transform:scaleY(1.06);transform-origin:0 23.71px;-webkit-text-stroke:0;letter-spacing:0.32px;">Stop space reclaim</div>
<div class="t" style="left:2632.5px;top:1511.3px;font-size:28px;line-height:28px;color:#4a6a98;-webkit-text-stroke:0.4px #4a6a98;transform:scaleY(1.06);transform-origin:0 23.71px;">Verify all backups</div>
<div class="t" style="left:2633px;top:1346.2px;font-size:24px;line-height:24px;font-weight:bold;color:#1a1a1a;transform:scaleY(1.04);transform-origin:0 20.32px;">MAINTENANCE</div>
<div class="a" style="left:2610px;top:1407px;width:293px;height:76px;border:5px solid #e8402a"></div>
<div class="a" style="left:2853px;top:655px;width:92px;height:93px;border:5px solid #e8402a"></div>
</body></html>
